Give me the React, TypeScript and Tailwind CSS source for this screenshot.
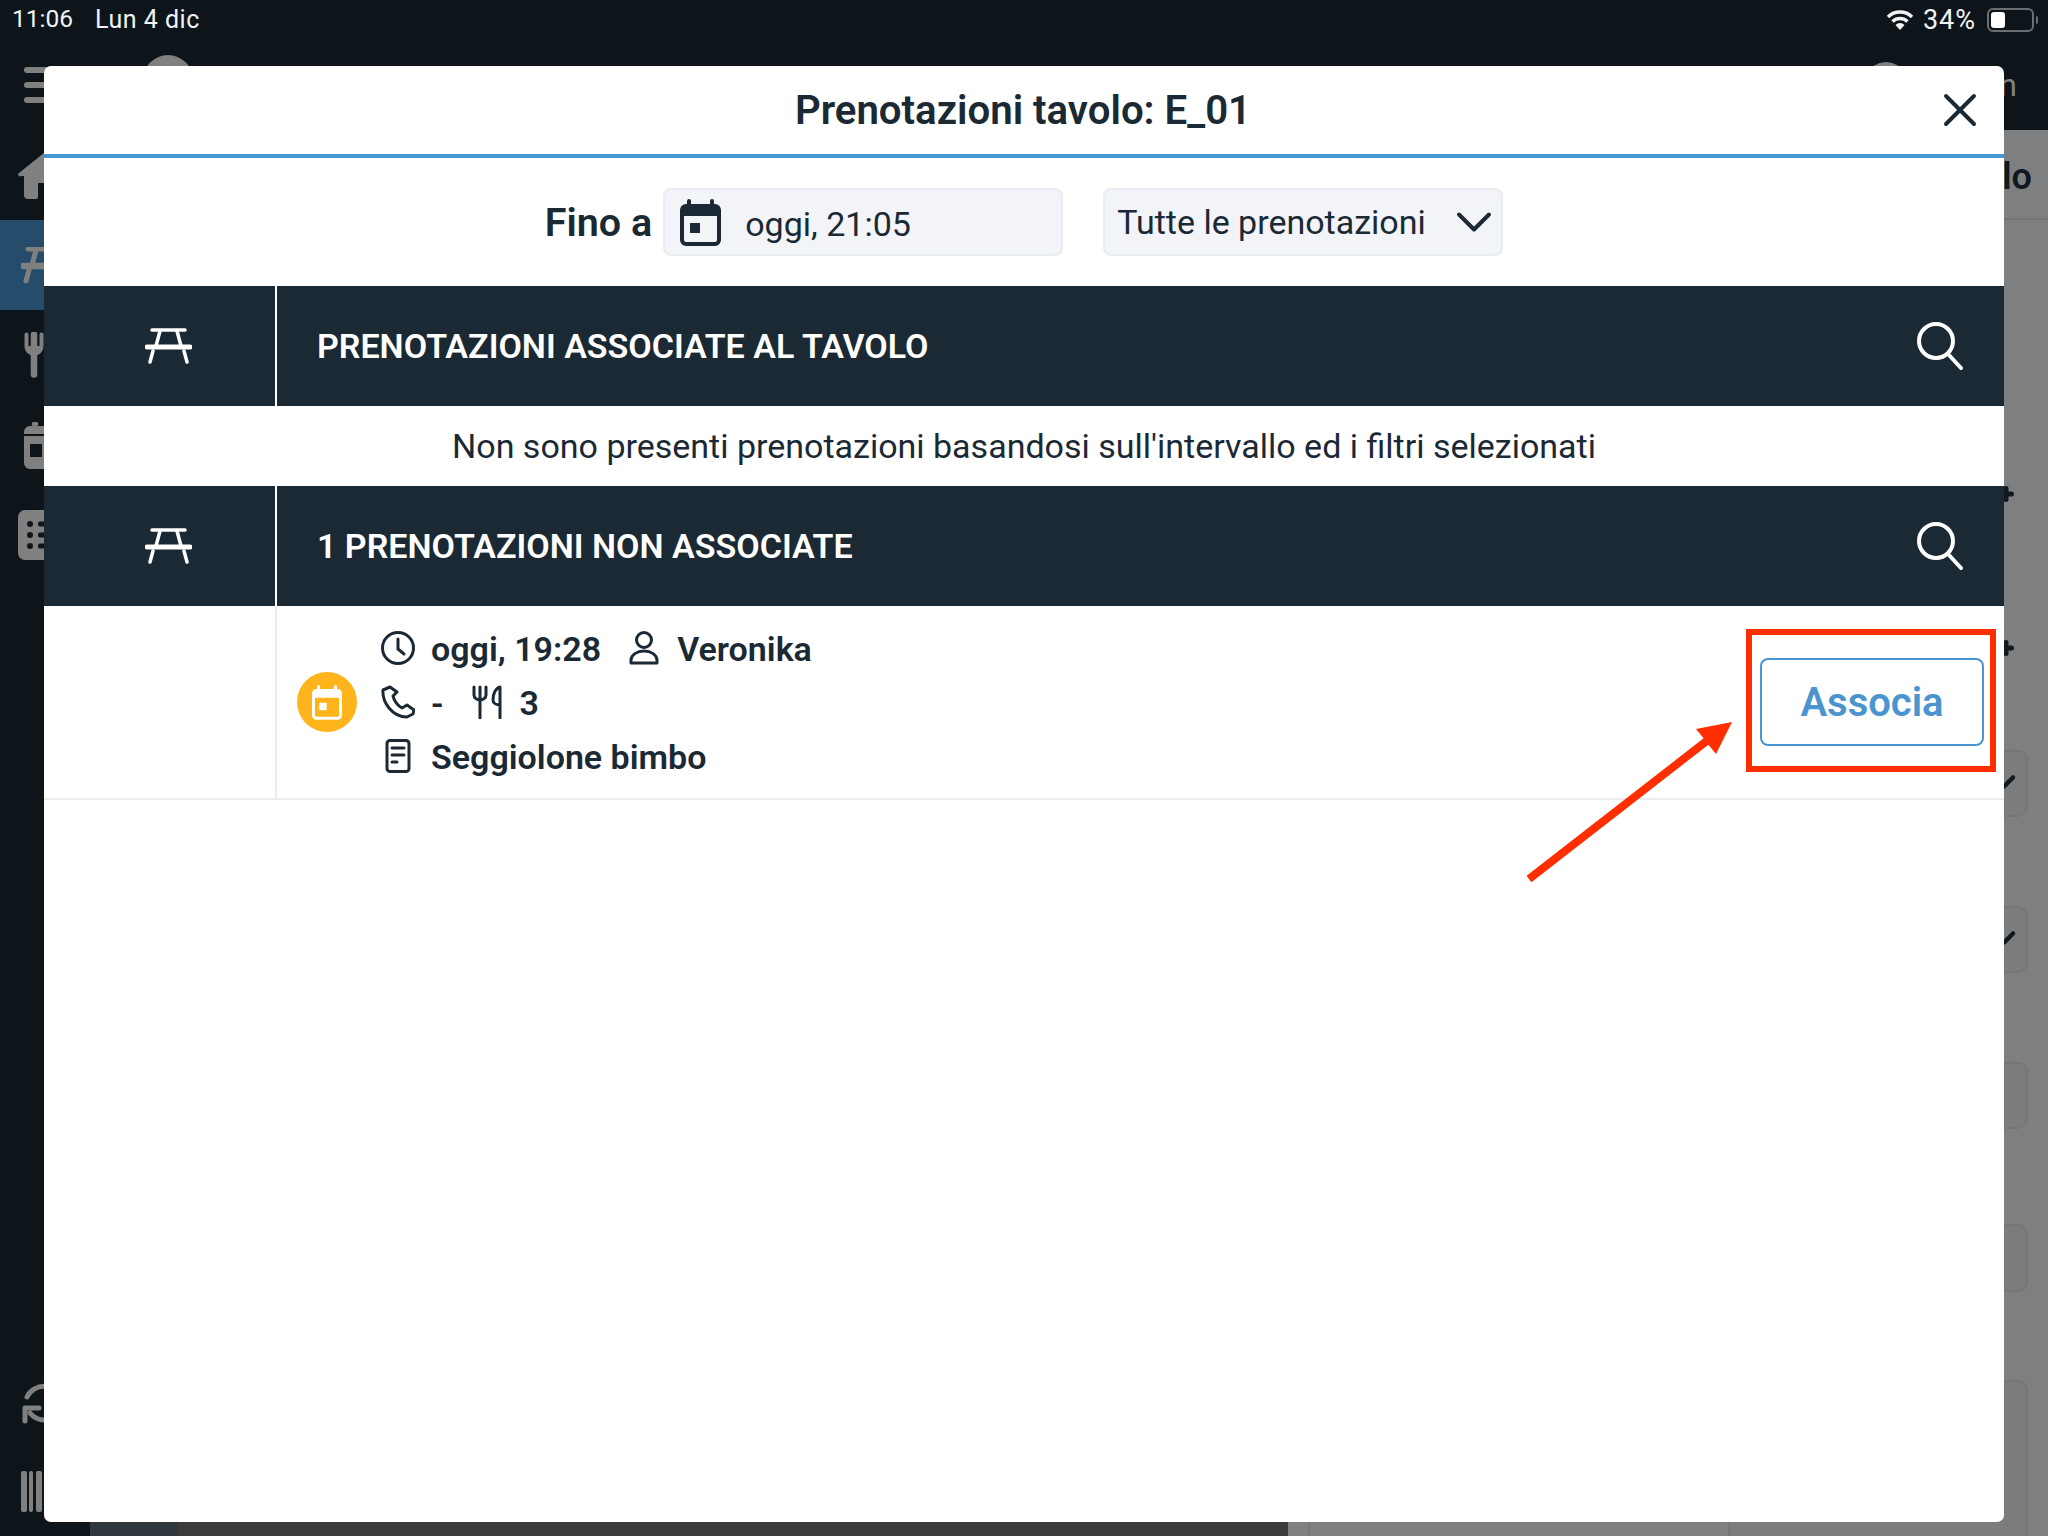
import { ChevronDown, X } from "lucide-react";

function TableIcon({ className = "", strokeWidth = 3.5 }: { className?: string; strokeWidth?: number }) {
  return (
    <svg viewBox="0 0 47 36" fill="none" stroke="currentColor" strokeWidth={strokeWidth} strokeLinecap="round" className={className}>
      <path d="M7 2h33" />
      <path d="M2 19h43" strokeWidth={strokeWidth + 1.5} />
      <path d="M15 3l-4 15M32 3l4 15" />
      <path d="M8 23l-3 11M39 23l3 11" />
    </svg>
  );
}

function CalendarIcon({ className = "" }: { className?: string }) {
  return (
    <svg viewBox="0 0 41 47" className={className}>
      <path fill="currentColor" fillRule="evenodd" d="M9 0a2 2 0 0 1 2 2v3h19V2a2 2 0 0 1 4 0v3h1a6 6 0 0 1 6 6v30a6 6 0 0 1-6 6H6a6 6 0 0 1-6-6V11a6 6 0 0 1 6-6h1V2a2 2 0 0 1 2-2zM4 17v24a2 2 0 0 0 2 2h29a2 2 0 0 0 2-2V17H4zm6 7h10v10H10V24z" />
    </svg>
  );
}

function SectionBar({ title }: { title: string }) {
  return (
    <div className="flex h-[120px] bg-[#1b2935] text-white">
      <div className="box-content flex w-[231px] items-center border-r-2 border-white">
        <TableIcon className="ml-[101px] h-[36px] w-[47px]" />
      </div>
      <div className="flex flex-1 items-center justify-between pr-[41px] pl-[40px]">
        <span className="pt-[1px] text-[34px] font-semibold">{title}</span>
        <svg viewBox="0 0 46 48" className="h-[48px] w-[46px]" fill="none" stroke="currentColor" strokeWidth="4" strokeLinecap="round">
          <circle cx="19" cy="19" r="17" />
          <path d="M31 32l13 14" />
        </svg>
      </div>
    </div>
  );
}

function Sidebar() {
  return (
    <div className="flex w-[90px] flex-col justify-between text-[#808080]">
      <div>
        <div className="flex h-[90px] items-center pl-[18px]">
          <svg viewBox="0 0 54 47" className="h-[47px] w-[54px]" fill="currentColor">
            <path d="M26 1L1 21a1.5 1.5 0 0 0 2 3h3v19a4 4 0 0 0 4 4h8a2 2 0 0 0 2-2V31h14v14a2 2 0 0 0 2 2h8a4 4 0 0 0 4-4V24h3a1.5 1.5 0 0 0 2-3L28 1a2 2 0 0 0-2 0z" />
          </svg>
        </div>
        <div className="flex h-[90px] items-center bg-[#254c6b] pl-[21px]">
          <TableIcon className="h-[36px] w-[47px]" strokeWidth={5} />
        </div>
        <div className="flex h-[90px] items-center pl-[24px]">
          <svg viewBox="0 0 20 46" className="h-[46px] w-[20px]" fill="none" stroke="currentColor" strokeLinecap="round">
            <path d="M2.5 2.5v12c0 4 3 7 7.5 7s7.5-3 7.5-7v-12" strokeWidth="4" />
            <path d="M10 2.5v40" strokeWidth="6.5" />
            <path d="M3 14h14v4l-7 4-7-4z" fill="currentColor" stroke="none" />
          </svg>
        </div>
        <div className="flex h-[90px] items-center pl-[24px]">
          <svg viewBox="0 0 40 47" className="h-[47px] w-[40px]" fill="currentColor">
            <path fillRule="evenodd" d="M11 0a2 2 0 0 1 2 4h14a2 2 0 0 1 2-4 2 2 0 0 1 2 4h3a6 6 0 0 1 6 6v31a6 6 0 0 1-6 6H6a6 6 0 0 1-6-6V10a6 6 0 0 1 6-6h3a2 2 0 0 1 2-4zM6 22v13h12V22H6z" />
            <path d="M0 13h40" stroke="#0d151b" strokeWidth="2" />
          </svg>
        </div>
        <div className="flex h-[90px] items-center pl-[18px]">
          <svg viewBox="0 0 40 50" className="h-[50px] w-[40px]">
            <rect width="40" height="50" rx="7" fill="currentColor" />
            <g fill="#0d151b">
              <circle cx="12" cy="14" r="3" />
              <circle cx="12" cy="25" r="3" />
              <circle cx="12" cy="36" r="3" />
              <rect x="20" y="11.5" width="14" height="5" rx="2" />
              <rect x="20" y="22.5" width="14" height="5" rx="2" />
              <rect x="20" y="33.5" width="14" height="5" rx="2" />
            </g>
          </svg>
        </div>
      </div>
      <div>
        <div className="flex h-[88px] items-center pl-[22px]">
          <svg viewBox="0 0 42 42" className="h-[42px] w-[42px]" fill="none" stroke="currentColor" strokeWidth="5" strokeLinecap="round" strokeLinejoin="round">
            <path d="M5 14A19 19 0 0 1 40 16" />
            <path d="M8 30A19 19 0 0 0 40 26" />
            <path d="M3 38V25h14" />
          </svg>
        </div>
        <div className="mb-[2px] flex h-[86px] items-center pl-[21px]">
          <svg viewBox="0 0 21 41" className="h-[41px] w-[21px]" fill="currentColor">
            <rect width="6" height="41" rx="2" />
            <rect x="8" width="4" height="41" rx="2" />
            <rect x="15" width="6" height="41" rx="2" />
          </svg>
        </div>
      </div>
    </div>
  );
}

function PlusMark({ className = "" }: { className?: string }) {
  return (
    <svg viewBox="0 0 16 16" className={`mr-[14px] h-[16px] w-[16px] ${className}`} fill="none" stroke="#11181e" strokeWidth="5" strokeLinecap="round">
      <path d="M3 8h10.5M8 2.5v11" />
    </svg>
  );
}

function FormCard({ className = "" }: { className?: string }) {
  return (
    <div className={`flex h-[67px] w-[300px] items-center justify-end rounded-[10px] border-2 border-[#747678] bg-[#7b7c7e] pr-[4px] ${className}`}>
      <ChevronDown className="-mt-[4px] h-[36px] w-[36px]" strokeWidth={3} />
    </div>
  );
}

function RightPanel() {
  return (
    <div className="flex w-[740px] flex-col overflow-hidden border-l-2 border-[#747576] bg-[#7e7f80] text-[#11181e]">
      <div className="flex h-[90px] shrink-0 items-center justify-end border-b-2 border-[#747576] pt-[6px] pr-[16px] text-[36px] leading-none font-semibold">
        Tavolo
      </div>
      <div className="flex flex-col items-end pr-[20px]">
        <PlusMark className="mt-[266px]" />
        <PlusMark className="mt-[138px]" />
        <FormCard className="mt-[94px]" />
        <FormCard className="mt-[89px]" />
        <div className="mt-[89px] h-[67px] w-[300px] shrink-0 rounded-[10px] border-2 border-[#747678] bg-[#7b7c7e]" />
        <div className="mt-[95px] h-[68px] w-[300px] shrink-0 rounded-[10px] border-2 border-[#747678] bg-[#7b7c7e]" />
        <div className="mt-[88px] h-[200px] w-[300px] shrink-0 rounded-[10px] border-2 border-[#747678] bg-[#7b7c7e]" />
      </div>
    </div>
  );
}

export default function App() {
  return (
    <div className="relative flex h-[1536px] w-[2048px] flex-col overflow-hidden bg-[#0d151b] font-[family-name:Roboto,sans-serif] text-[#1b2935]">
      {/* status bar */}
      <div className="flex h-[40px] shrink-0 items-center justify-between pr-[10px] pl-[12px] text-[#f2f3f4]">
        <div className="flex">
          <span className="text-[24.5px]">11:06</span>
          <span className="ml-[22px] text-[25px] tracking-[0.5px]">Lun 4 dic</span>
        </div>
        <div className="flex items-center">
          <svg viewBox="0 0 28 22" className="mr-[9px] h-[22px] w-[28px]" fill="none" stroke="currentColor" strokeWidth="3.4">
            <path d="M2 8a17 17 0 0 1 24 0" />
            <path d="M6.5 12.5a11 11 0 0 1 15 0" />
            <path d="M14 21l-4.5-5a6 6 0 0 1 9 0z" fill="currentColor" stroke="none" />
          </svg>
          <span className="mr-[11px] text-[27px] tracking-[1px]">34%</span>
          <div className="flex h-[24px] w-[47px] items-center rounded-[6px] border-2 border-[#6b6e70] pl-[2px]">
            <div className="h-[16px] w-[14px] rounded-[3px] bg-white" />
          </div>
          <div className="ml-[2px] h-[8px] w-[2px] rounded-r-sm bg-[#6b6e70]" />
        </div>
      </div>

      {/* app bar behind the dialog */}
      <div className="flex h-[90px] shrink-0 items-center justify-between pr-[31px] pl-[24px] text-[#808080]">
        <div className="flex items-center">
          <div className="flex w-[36px] flex-col gap-[9px]">
            <div className="h-[6px] rounded-full bg-[#808080]" />
            <div className="h-[6px] rounded-full bg-[#808080]" />
            <div className="h-[6px] rounded-full bg-[#808080]" />
          </div>
          <div className="-mt-[10px] ml-[83px] h-[50px] w-[50px] rounded-full bg-[#808080]" />
        </div>
        <div className="flex items-center gap-[19px] text-[32px]">
          <div className="-mt-[6px] h-[40px] w-[40px] rounded-full bg-[#808080]" />
          <span>Admin</span>
        </div>
      </div>

      <div className="flex min-h-0 flex-1">
        <Sidebar />
        <div className="flex w-[1218px] flex-col justify-end bg-[#808080]">
          <div className="flex h-[14px] w-[1198px] bg-[#3b3b3b]">
            <div className="w-[88px] bg-[#2f383d]" />
          </div>
        </div>
        <RightPanel />
      </div>

      {/* dialog */}
      <div className="absolute top-[66px] left-[44px] flex h-[1456px] w-[1960px] flex-col overflow-hidden rounded-[7px] bg-white">
        <div className="flex h-[92px] items-center border-b-4 border-[#4a98d3] pr-[16px] pl-[70px]">
          <h1 className="flex-1 pt-[2px] text-center text-[40.2px] font-semibold">Prenotazioni tavolo: E_01</h1>
          <X className="h-[56px] w-[56px]" strokeWidth={1.7} />
        </div>

        <div className="flex h-[128px] items-center justify-center">
          <span className="mr-[11px] pt-[2px] text-[39.5px] font-semibold">Fino a</span>
          <div className="flex h-[68px] w-[400px] items-center rounded-[8px] border-2 border-[#e9ecf1] bg-[#f2f4f8] pl-[15px]">
            <CalendarIcon className="h-[47px] w-[41px]" />
            <span className="ml-[24px] pt-[4px] text-[34px]">oggi, 21:05</span>
          </div>
          <div className="ml-[40px] flex h-[68px] w-[400px] items-center justify-between rounded-[8px] border-2 border-[#e9ecf1] bg-[#f2f4f8] pl-[12px]">
            <span className="text-[34px]">Tutte le prenotazioni</span>
            <ChevronDown className="-mr-[3px] h-[60px] w-[60px]" strokeWidth={1.6} />
          </div>
        </div>

        <SectionBar title="PRENOTAZIONI ASSOCIATE AL TAVOLO" />
        <div className="flex h-[80px] items-center justify-center text-[34px]">
          Non sono presenti prenotazioni basandosi sull'intervallo ed i filtri selezionati
        </div>
        <SectionBar title="1 PRENOTAZIONI NON ASSOCIATE" />

        <div className="flex h-[194px] border-b-2 border-[#e9edf1]">
          <div className="w-[233px] border-r-2 border-[#e9edf1]" />
          <div className="flex flex-1 items-center pr-[20px] pl-[20px]">
            <div className="flex h-[60px] w-[60px] items-center justify-center rounded-full bg-[#ffb41c] text-white">
              <CalendarIcon className="h-[35px] w-[30px]" />
            </div>
            <div className="ml-[24px] flex flex-1 flex-col gap-[12px] text-[34px] leading-[40px] font-semibold">
              <div className="flex items-center">
                <svg viewBox="0 0 34 34" className="h-[34px] w-[34px]" fill="none" stroke="currentColor" strokeWidth="3" strokeLinecap="round">
                  <circle cx="17" cy="17" r="15.5" />
                  <path d="M17 8v10l6 5" />
                </svg>
                <span className="ml-[16px] pt-[2px]">oggi, 19:28</span>
                <svg viewBox="0 0 30 34" className="ml-[28px] h-[34px] w-[30px]" fill="none" stroke="currentColor" strokeWidth="3">
                  <circle cx="15" cy="9" r="7.5" />
                  <path d="M2 32v-3c0-5 6-9 13-9s13 4 13 9v3z" strokeLinejoin="round" />
                </svg>
                <span className="ml-[18px] pt-[2px]">Veronika</span>
              </div>
              <div className="flex items-center">
                <svg viewBox="0 0 34 34" className="h-[34px] w-[34px]" fill="none" stroke="currentColor" strokeWidth="3" strokeLinejoin="round">
                  <path d="M9 2L2 5c-1 12 9 27 24 27l6-3 1-4-7-5-5 3c-4-2-8-7-9-12l4-4z" />
                </svg>
                <span className="ml-[16px] pt-[2px]">-</span>
                <svg viewBox="0 0 30 34" className="ml-[29px] h-[34px] w-[30px]" fill="none" stroke="currentColor" strokeWidth="3" strokeLinecap="round" strokeLinejoin="round">
                  <path d="M2 2v8c0 3 3 5 6 5s6-2 6-5V2M8 2v31" />
                  <path d="M28 33V2c-4 1-7 6-7 13 0 3 3 5 7 5" />
                </svg>
                <span className="ml-[17px] pt-[2px]">3</span>
              </div>
              <div className="flex items-center">
                <svg viewBox="0 0 34 34" className="h-[34px] w-[34px]" fill="none" stroke="currentColor" strokeWidth="3" strokeLinecap="round">
                  <rect x="6" y="1.5" width="22" height="31" rx="3" />
                  <path d="M11 9h12M11 16h12M11 23h5" />
                </svg>
                <span className="ml-[16px] pt-[2px]">Seggiolone bimbo</span>
              </div>
            </div>
            <button className="-ml-[1px] flex h-[88px] w-[224px] items-center justify-center rounded-[8px] border-2 border-[#4a94d0] pt-[2px] text-[40px] font-semibold text-[#4a94d0]">
              Associa
            </button>
          </div>
        </div>
      </div>

      {/* red annotation */}
      <div className="absolute top-[629px] left-[1746px] h-[143px] w-[250px] border-[6px] border-[#ff2e00]" />
      <svg viewBox="0 0 2048 1536" className="absolute top-0 left-0 h-[1536px] w-[2048px]" fill="#ff2e00">
        <path d="M1526.6 875.8L1703.6 738.3L1696 729L1732 722L1716 754L1708.4 744.7L1531.4 882.2Z" />
      </svg>
    </div>
  );
}
